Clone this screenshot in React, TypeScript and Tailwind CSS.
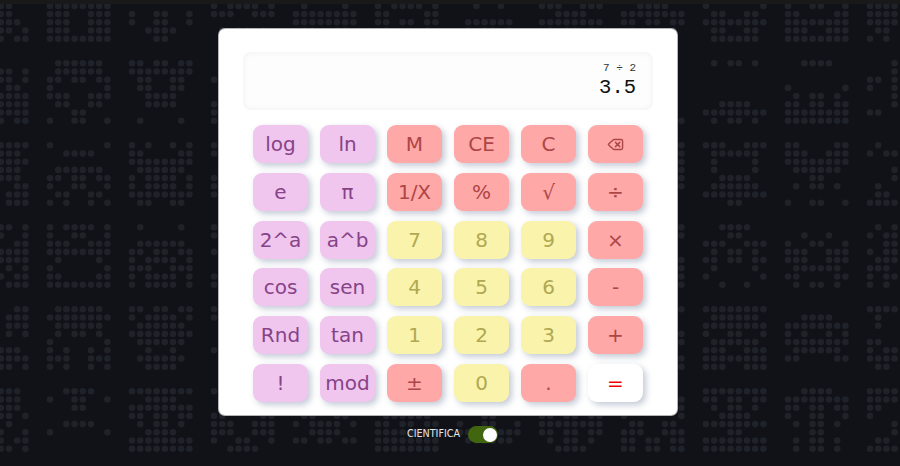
import { Delete } from "lucide-react";
import type { ReactNode } from "react";

// background dots: [tile x, tile y, first row, rows of the 8x8 invader]
const invaders: [number, number, number, string][] = [
  [-32, -18.7, 3, "00001100 00001100 00001110 00001101 00001011"],
  [50, -18.7, 3, "11111111 11100111 11100111 11100111 11111111"],
  [132, -18.7, 3, "00000000 10011001 10011001 00111100 00011000"],
  [214, -18.7, 3, "10111101 11100111 00000000 01011010 00000000"],
  [296, -18.7, 3, "01000010 11111111 11111111 01100110 00000000"],
  [378, -18.7, 3, "10111101 11000011 11011011 01000010 00000000"],
  [460, -18.7, 3, "00100100 00000000 01111110 01011010 00000000"],
  [542, -18.7, 3, "11100111 00111100 11111111 01011010 00000000"],
  [624, -18.7, 3, "00111100 11111111 11011011 01000010 00000000"],
  [706, -18.7, 3, "10000001 01100110 11111111 01100110 01111110"],
  [788, -18.7, 3, "10011001 11000011 11111111 11100111 11111111"],
  [870, -18.7, 3, "11110000 11110000 11110000 01100000 10100000"],

  [-32, 63.3, 0, "00000000 00001101 00001101 00000110 00001111 00001111 00001111 00001011"],
  [50, 63.3, 0, "01111110 01111110 11011011 10000001 11100111 01100110 00011000 10011001"],
  [132, 63.3, 0, "11011011 11111111 01100110 01100110 00111100 00111100 00000000 01000010"],
  [214, 63.3, 0, "00000000 00000000 10000000 00000000 00000000 10000000 10000000 10000000"],
  [624, 63.3, 0, "00000000 00000000 00000000 00000000 00000000 00000000 00000000 00000001"],
  [706, 63.3, 0, "01011010 00000000 00000000 00000000 00000000 00111100 11111111 01011010"],
  [788, 63.3, 0, "00111100 00000000 00000000 10000001 01011010 11011011 11111111 11111111"],
  [870, 63.3, 0, "00010000 00010000 11010000 10010000 00010000 00010000 11000000 00000000"],

  [-32, 145.3, 0, "00001111 00001110 00001111 00001110 00001110 00000011 00000111 00000111"],
  [50, 145.3, 0, "10000001 00111100 00000000 01111110 11011011 10011001 01100110 10100101"],
  [132, 145.3, 0, "10100101 11000011 11111111 01111110 10111101 10111101 11111111 01100110"],
  [214, 145.3, 0, "10000000 10000000 00000000 00000000 10000000 10000000 10000000 00000000"],
  [624, 145.3, 0, "00000001 00000001 00000001 00000001 00000001 00000001 00000000 00000000"],
  [706, 145.3, 0, "11100111 01111110 01000010 01000010 00111100 01111110 11111111 00011000"],
  [788, 145.3, 0, "11000011 11100111 11111111 01111110 00011000 01011010 00000000 10011001"],
  [870, 145.3, 0, "01000000 10110000 00000000 00010000 00010000 01000000 01100000 11110000"],

  [-32, 227.3, 0, "00001101 00001001 00000011 00001111 00001111 00000101 00001011 00000111"],
  [50, 227.3, 0, "10111101 10011001 11100111 11111111 01000010 10000001 11000011 11111111"],
  [132, 227.3, 0, "01000010 00000000 01111110 11011011 10111101 11100111 10111101 10111101"],
  [214, 227.3, 0, "10000000 10000000 00000000 10000000 00000000 00000000 10000000 10000000"],
  [624, 227.3, 0, "00000001 00000001 00000000 00000000 00000001 00000001 00000001 00000001"],
  [706, 227.3, 0, "00111100 00011000 11100111 01011010 11011011 01000010 10000001 00100100"],
  [788, 227.3, 0, "00000000 00100100 10011001 11100111 11100111 01111110 11000011 01011010"],
  [870, 227.3, 0, "01010000 10110000 00110000 10110000 01110000 11100000 10110000 10100000"],

  [-32, 309.3, 0, "00000011 00000111 00000111 00000101 00000000 00001110 00001111 00001101"],
  [50, 309.3, 0, "01111110 11111111 01111110 01011010 10000001 10100101 11100111 10100101"],
  [132, 309.3, 0, "11011011 10111101 01111110 11111111 01111110 00100100 01111110 00111100"],
  [214, 309.3, 0, "10000000 10000000 00000000 00000000 00000000 10000000 00000000 00000000"],
  [624, 309.3, 0, "00000001 00000000 00000000 00000001 00000001 00000000 00000001 00000001"],
  [706, 309.3, 0, "11111111 01111110 11111111 10011001 01111110 11100111 11111111 11100111"],
  [788, 309.3, 0, "00000000 00111100 11111111 10100101 11111111 01111110 11000011 00000000"],
  [870, 309.3, 0, "11110000 01000000 01000000 00000000 11000000 10110000 11110000 01100000"],

  [-32, 391.3, 0, "00001110 00001110 00001110 00001101 00000100 00001001 00001011 00001101"],
  [50, 391.3, 0, "00111100 10011001 00011000 00000000 00111100 10000001 00000000 00000000"],
  [132, 391.3, 0, "11111111 00111100 11111111 11011011 01011010 00111100 11111111 11111111"],
  [214, 391.3, 0, "10000000 00000000 00000000 11000011 11100111 11100111 10011001 00111100"],
  [296, 391.3, 3, "01100110 10111101 00111100 11011011 00000000"],
  [378, 391.3, 3, "01111110 11011011 11111111 11111111 11111111"],
  [460, 391.3, 3, "00011000 10011001 11100111 01111110 00000000"],
  [542, 391.3, 3, "11011011 11111111 11011011 01011010 00111100"],
  [624, 391.3, 1, "00000001 00000001 10000001 01100110 11100111 11011011 11011011"],
  [706, 391.3, 0, "11111111 11011011 01011010 00111100 11111111 00011000 11111111 11111111"],
  [788, 391.3, 0, "00111100 11111111 11011011 10011001 01011010 00011000 01011010 01011010"],
  [870, 391.3, 0, "11110000 11110000 11000000 10000000 00010000 00010000 01100000 11110000"],
];

const DotBackground = () => (
  <svg className="absolute inset-0" width="900" height="466" viewBox="0 0 900 466">
    {invaders.map(([x, y, first, rows]) =>
      rows.split(" ").map((row, r) =>
        row.split("").map((bit, c) =>
          bit === "1" ? (
            <circle key={`${x}-${y}-${r}-${c}`} cx={x + c * 8.2} cy={y + (first + r) * 8.2} r="3.3" fill="#1f2229" />
          ) : null
        )
      )
    )}
  </svg>
);

type Kind = "sci" | "op" | "num" | "eq";

const kinds: Record<Kind, string> = {
  sci: "bg-[#f0c6ee] text-[#864388]",
  op: "bg-[#ffa8a8] text-[#ad4646]",
  num: "bg-[#faf3ab] text-[#b0a852]",
  eq: "bg-white text-[#f00000]",
};

const keys: [ReactNode, Kind][] = [
  ["log", "sci"], ["ln", "sci"], ["M", "op"], ["CE", "op"], ["C", "op"],
  [<Delete key="del" size={17} strokeWidth={2} />, "op"],
  ["e", "sci"], ["π", "sci"], ["1/X", "op"], ["%", "op"], ["√", "op"], ["÷", "op"],
  ["2^a", "sci"], ["a^b", "sci"], ["7", "num"], ["8", "num"], ["9", "num"], ["×", "op"],
  ["cos", "sci"], ["sen", "sci"], ["4", "num"], ["5", "num"], ["6", "num"], ["-", "op"],
  ["Rnd", "sci"], ["tan", "sci"], ["1", "num"], ["2", "num"], ["3", "num"], ["+", "op"],
  ["!", "sci"], ["mod", "sci"], ["±", "op"], ["0", "num"], [".", "op"], ["=", "eq"],
];

export default function App() {
  return (
    <div className="relative h-[466px] w-[900px] overflow-hidden bg-[#101218] font-['DejaVu_Sans',sans-serif]">
      <DotBackground />
      <div className="absolute inset-x-0 top-0 h-[4px] bg-[#191919]" />

      <div className="relative flex flex-col items-center pt-[29px] pr-[4px]">
        <div className="h-[386px] w-[458px] rounded-md bg-white px-6 pt-[23px] shadow-[0_0_0_1px_#b4b4b4]">
          <div className="flex h-[58px] flex-col items-end rounded-lg bg-[#fdfdfd] pr-[17px] pt-[9px] font-['Liberation_Mono',monospace] shadow-[inset_0_0_6px_rgba(0,0,0,0.06)]">
            <div className="text-[11px] leading-[14px] text-[#333]">7 ÷ 2</div>
            <div className="text-[20.5px] leading-[26px] text-[#111]">3.5</div>
          </div>

          <div className="mt-[15px] grid grid-cols-6 gap-x-3 gap-y-[9.8px] px-[10px]">
            {keys.map(([label, kind], i) => (
              <button
                key={i}
                className={`flex h-[38px] items-center justify-center rounded-[9px] text-[20px] leading-none shadow-[3px_3px_6px_rgba(60,80,120,0.3)] ${kinds[kind]}`}
              >
                {label}
              </button>
            ))}
          </div>
        </div>

        <div className="mt-[11px] flex items-center gap-2 pl-[9px]">
          <span className="text-[9.6px] text-[#e4e4e4]">CIENTIFICA</span>
          <div className="flex h-[17px] w-[30px] items-center justify-end rounded-full bg-[#42660f] pr-px">
            <div className="h-[14px] w-[14px] rounded-full bg-white" />
          </div>
        </div>
      </div>
    </div>
  );
}
